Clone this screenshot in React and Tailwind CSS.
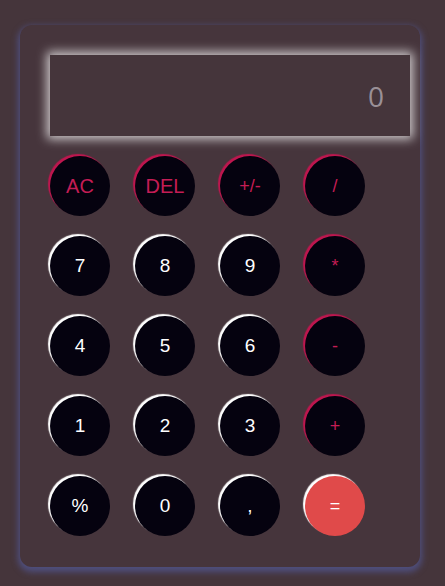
import React from "react";

const rows = [
  [["AC", "fn"], ["DEL", "fn"], ["+/-", "op"], ["/", "op"]],
  [["7", "num"], ["8", "num"], ["9", "num"], ["*", "op"]],
  [["4", "num"], ["5", "num"], ["6", "num"], ["-", "op"]],
  [["1", "num"], ["2", "num"], ["3", "num"], ["+", "op"]],
  [["%", "num"], ["0", "num"], [",", "num"], ["=", "eq"]],
];

function Btn({ label, kind }) {
  let cls =
    "w-[60px] h-[60px] rounded-full flex items-center justify-center ";
  if (kind === "fn")
    cls +=
      "bg-[#05020f] text-[#c41d55] text-[20px] shadow-[-2px_-2px_1px_#c0164f]";
  else if (kind === "op")
    cls +=
      "bg-[#05020f] text-[#c41d55] text-[18px] shadow-[-2px_-2px_1px_#c0164f]";
  else if (kind === "num")
    cls +=
      "bg-[#05020f] text-white text-[19px] shadow-[-2px_-2px_1px_#ffffff]";
  else
    cls +=
      "bg-[#e04a4a] text-white text-[18px] shadow-[-2px_-2px_1px_#ffffff]";
  return <div className={cls}>{label}</div>;
}

export default function App() {
  return (
    <div
      className="w-[445px] h-[586px] bg-[#45353b] pt-[25px] pl-[20px]"
      style={{ fontFamily: '"Liberation Sans", Arial, sans-serif' }}
    >
      <div className="w-[400px] h-[542px] rounded-[12px] bg-[#46353c] shadow-[0_3px_6px_2px_#4f4f7e] pt-[30px] pl-[30px] pr-[10px]">
        <div
          className="h-[81px] w-[360px] bg-[#45353b] shadow-[0_0_10px_3px_rgba(255,255,255,0.75)] flex items-center justify-end pr-[26px] text-[28px] text-[#9a9097]"
          style={{ fontFamily: '"Open Sans", sans-serif' }}
        >
          0
        </div>
        <div className="mt-[20px] grid grid-cols-[60px_60px_60px_60px] gap-x-[25px] gap-y-[20px]">
          {rows.flat().map(([l, k], i) => (
            <Btn key={i} label={l} kind={k} />
          ))}
        </div>
      </div>
    </div>
  );
}
